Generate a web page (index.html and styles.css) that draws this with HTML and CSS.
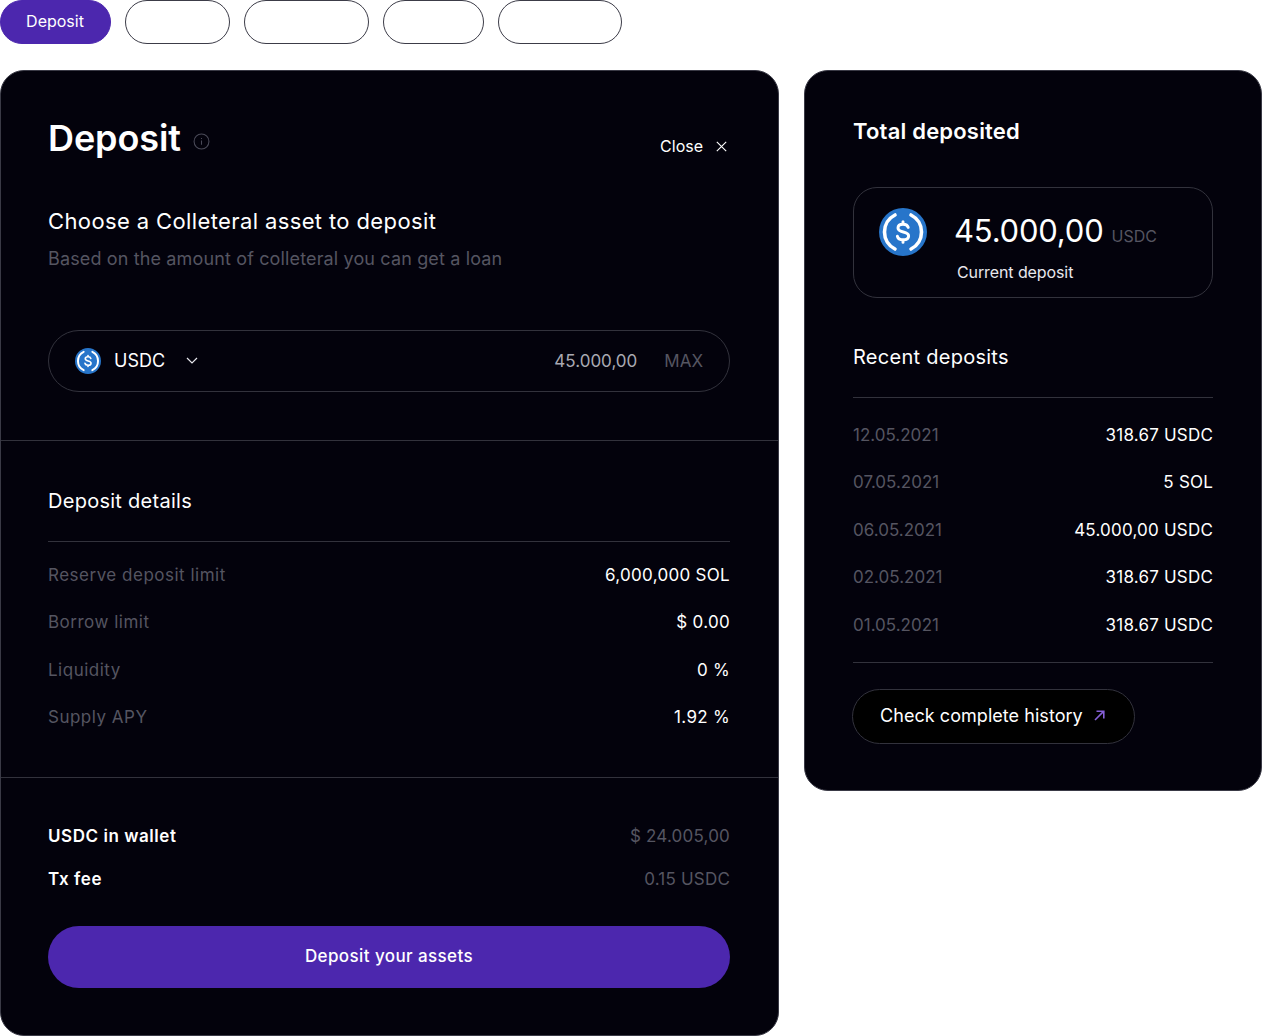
FILE: index.html
```html
<!DOCTYPE html>
<html lang="en">
<head>
<meta charset="utf-8">
<title>Deposit</title>
<link rel="stylesheet" href="styles.css">
</head>
<body>
<nav class="tabs">
  <button class="tab tab-active tab-1">Deposit</button>
  <button class="tab tab-2"></button>
  <button class="tab tab-3"></button>
  <button class="tab tab-4"></button>
  <button class="tab tab-5"></button>
</nav>
<main class="layout">
  <section class="card card-main">
    <div class="section section-top">
      <header class="main-head">
        <div class="title-wrap">
          <h1 class="title">Deposit</h1>
          <svg class="info" width="17" height="17" viewBox="0 0 16 16" fill="none"><circle cx="8" cy="8" r="7" stroke="#4a4a58"/><path d="M8 7v4M8 4.600v1" stroke="#4a4a58"/></svg>
        </div>
        <div class="close">Close
          <svg width="11" height="11" viewBox="0 0 11 11" fill="none"><path d="M.8.8l9.400 9.400M10.200.8L.8 10.200" stroke="#fff" stroke-width="1.100"/></svg>
        </div>
      </header>
      <h2 class="choose">Choose a Colleteral asset to deposit</h2>
      <p class="sub">Based on the amount of colleteral you can get a loan</p>
      <div class="asset-input">
        <svg class="coin-small" viewBox="0 0 48 48"><use href="#usdc"/></svg>
        <span class="asset-name">USDC</span>
        <svg class="chev" width="12" height="7" viewBox="0 0 12 7" fill="none"><path d="M1 1l5 5 5-5" stroke="#e8e8ee" stroke-width="1.200"/></svg>
        <span class="asset-amount">45.000,00</span>
        <span class="asset-max">MAX</span>
      </div>
    </div>
    <div class="section section-details">
      <h3 class="sec-title">Deposit details</h3>
      <ul class="rows rows-details">
        <li class="row"><span class="muted">Reserve deposit limit</span><span>6,000,000 SOL</span></li>
        <li class="row"><span class="muted">Borrow limit</span><span>$ 0.00</span></li>
        <li class="row"><span class="muted">Liquidity</span><span>0 %</span></li>
        <li class="row"><span class="muted">Supply APY</span><span>1.92 %</span></li>
      </ul>
    </div>
    <div class="section section-foot">
      <div class="foot-row"><strong>USDC in wallet</strong><span class="muted">$ 24.005,00</span></div>
      <div class="foot-row"><strong>Tx fee</strong><span class="muted">0.15 USDC</span></div>
      <button class="submit">Deposit your assets</button>
    </div>
  </section>
  <aside class="card card-side">
    <h2 class="side-title">Total deposited</h2>
    <div class="total-box">
      <svg class="coin-big" viewBox="0 0 48 48"><use href="#usdc"/></svg>
      <div class="total-text">
        <div class="total-line"><span class="total-num">45.000,00</span><span class="total-unit">USDC</span></div>
        <div class="total-label">Current deposit</div>
      </div>
    </div>
    <h3 class="sec-title recent">Recent deposits</h3>
    <ul class="rows rows-recent">
      <li class="row"><span class="muted">12.05.2021</span><span>318.67 USDC</span></li>
      <li class="row"><span class="muted">07.05.2021</span><span>5 SOL</span></li>
      <li class="row"><span class="muted">06.05.2021</span><span>45.000,00 USDC</span></li>
      <li class="row"><span class="muted">02.05.2021</span><span>318.67 USDC</span></li>
      <li class="row"><span class="muted">01.05.2021</span><span>318.67 USDC</span></li>
    </ul>
    <button class="history">Check complete history
      <svg width="11" height="11" viewBox="0 0 11 11" fill="none"><path d="M1 10L9.600 1.400M2.500 1.200h7.300v7.300" stroke="#8660d8" stroke-width="1.600"/></svg>
    </button>
  </aside>
</main>
<svg class="defs" width="0" height="0">
  <symbol id="usdc" viewBox="0 0 48 48">
    <circle cx="24" cy="24" r="24" fill="#2775ca"/>
    <path d="M16 7A19 19 0 0 0 16 41M32 7A19 19 0 0 1 32 41" fill="none" stroke="#fff" stroke-width="3.600" stroke-linecap="round"/>
    <path d="M29.200 19.400c-.6-2.200-2.600-3.200-5.200-3.200-3 0-5 1.500-5 3.800 0 5.500 10.600 2.600 10.600 8 0 2.400-2.300 3.800-5.400 3.800-3 0-5.200-1.200-5.800-3.500M24 13.800v2.400M24 31.800v2.400" fill="none" stroke="#fff" stroke-width="3" stroke-linecap="round"/>
  </symbol>
</svg>
</body>
</html>
```
FILE: styles.css
```css
* { box-sizing: border-box; }
html, body { margin: 0; padding: 0; }
body {
  width: 1262px;
  height: 1036px;
  overflow: hidden;
  background: #fff;
  color: #fff;
  font-family: "Inter", "Liberation Sans", sans-serif;
}
h1, h2, h3, p, ul { margin: 0; padding: 0; font-weight: 400; }
ul { list-style: none; }
button { font-family: inherit; }
.defs { position: absolute; }

.tabs { display: flex; gap: 14px; height: 44px; }
.tab {
  height: 44px;
  border: 1px solid #3c3c48;
  border-radius: 22px;
  background: #fff;
  color: #fff;
  font-size: 16px;
  padding: 0 1px 2px 0;
}
.tab-active { background: #4c27ae; border-color: #4c27ae; }
.tab-1 { width: 111px; }
.tab-2 { width: 105px; }
.tab-3 { width: 125px; }
.tab-4 { width: 101px; }
.tab-5 { width: 124px; }

.layout { display: flex; gap: 25px; align-items: flex-start; margin-top: 26px; }
.card {
  background: #03020c;
  border: 1px solid #3a3a46;
  border-radius: 24px;
}
.card-main { width: 779px; height: 966px; display: flex; flex-direction: column; }
.card-side { width: 458px; height: 721px; padding: 48px 48px 0; }

.section { padding: 0 48px 0 47px; }
.section-top { height: 370px; padding-top: 44px; border-bottom: 1px solid #32323c; }
.main-head { display: flex; justify-content: space-between; align-items: flex-start; height: 50px; }
.title-wrap { display: flex; align-items: center; gap: 12px; height: 46px; }
.title { font-size: 36px; font-weight: 600; line-height: 46px; letter-spacing: -.1px; }
.info { margin-top: 6px; }
.close {
  display: flex; align-items: center; gap: 13px;
  font-size: 16px; line-height: 20px; margin-top: 21px; margin-right: 3px;
}
.choose { font-size: 22px; line-height: 30px; margin-top: 41px; letter-spacing: .38px; }
.sub { font-size: 18px; line-height: 24px; color: #555561; margin-top: 11px; letter-spacing: .14px; }
.asset-input {
  display: flex; align-items: center;
  height: 62px; margin-top: 59px;
  border: 1px solid #32323c; border-radius: 31px;
  padding: 0 26px 1px;
  font-size: 18px;
}
.coin-small { width: 26px; height: 26px; }
.asset-name { margin-left: 13px; }
.chev { margin-left: 21px; }
.asset-amount { margin-left: auto; color: #a9a9b2; font-size: 17px; }
.asset-max { margin-left: 27px; color: #555561; font-size: 17px; }

.section-details { height: 337px; padding-top: 46px; border-bottom: 1px solid #32323c; }
.sec-title { font-size: 20px; line-height: 28px; letter-spacing: .27px; }
.rows-details { margin-top: 26px; border-top: 1px solid #32323c; padding-top: 9px; }
.row {
  display: flex; justify-content: space-between; align-items: center;
  height: 47.5px; font-size: 17px; letter-spacing: .2px;
}
.rows-details .muted { letter-spacing: .5px; }
.rows-details .row span:last-child { letter-spacing: .3px; }
.rows-recent .muted { letter-spacing: 0; }
.muted { color: #555561; }

.section-foot { padding-top: 36px; }
.foot-row {
  display: flex; justify-content: space-between; align-items: center;
  height: 43px; font-size: 17px; letter-spacing: .2px;
}
.foot-row strong { font-weight: 600; letter-spacing: .55px; }
.submit {
  display: block; width: 100%; height: 62px; margin-top: 26px;
  border: 0; border-radius: 31px;
  background: #4c27ae; color: #fff;
  font-size: 17px; font-weight: 500; letter-spacing: .4px;
  padding: 0 0 2px;
}

.side-title { font-size: 22px; font-weight: 600; line-height: 30px; margin: -3px 0 0; letter-spacing: .2px; }
.total-box {
  display: flex; align-items: flex-start;
  height: 111px; margin-top: 41px;
  border: 1px solid #32323c; border-radius: 24px;
  padding: 20px 26px 0 25px;
}
.coin-big { width: 48px; height: 48px; flex: none; }
.total-text { margin-left: 27px; }
.total-line { display: flex; align-items: baseline; gap: 8px; margin-top: 1px; }
.total-num { font-size: 31px; line-height: 44px; letter-spacing: -.2px; }
.total-unit { font-size: 16px; color: #555561; }
.total-label { font-size: 16px; line-height: 22px; margin-top: 8px; margin-left: 3px; color: #e8e8ee; letter-spacing: -.1px; }
.recent { margin: 45px 0 0; }
.rows-recent {
  margin-top: 26px; border-top: 1px solid #32323c; border-bottom: 1px solid #32323c;
  padding: 13px 0 13px;
}
.history {
  display: flex; align-items: center; gap: 11px;
  height: 55px; margin: 26px 0 0 -1px; padding: 0 29px 2px 27px;
  background: #000; color: #fff;
  border: 1px solid #32323c; border-radius: 28px;
  font-size: 18px; letter-spacing: .05px;
}
```
